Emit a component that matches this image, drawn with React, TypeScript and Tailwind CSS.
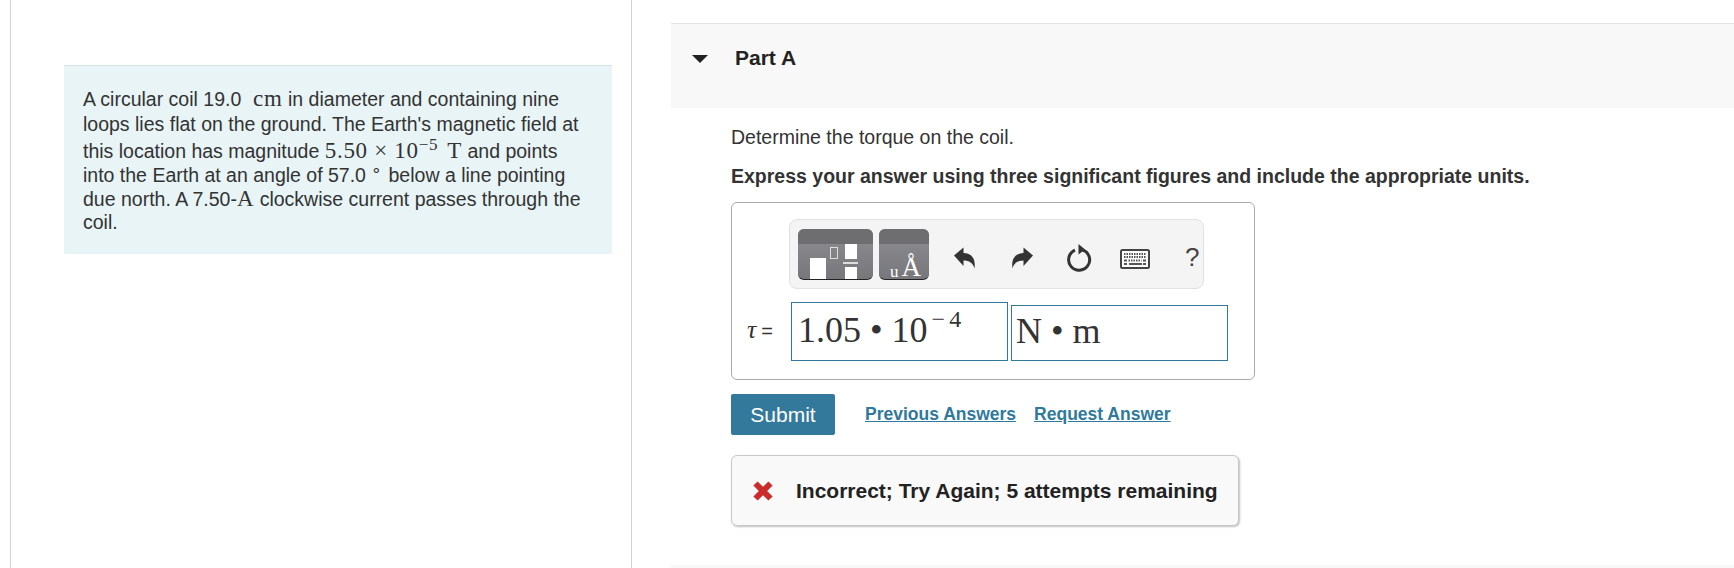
const Mth = ({ children }: { children: React.ReactNode }) => (
  <span className="font-['Liberation_Serif',serif] text-[23px] tracking-[0.7px]">{children}</span>
);

const Undo = ({ flip }: { flip?: boolean }) => (
  <svg viewBox="0 0 24 24" className={`w-[24px] h-[26px] ${flip ? "-scale-x-100" : ""}`} fill="#333">
    <path d="M1 9.500 10.500 1.500v5.500c7.500 .2 12.500 5 11 15.500-1.300-5.500-5.500-8-11-8v5.500z" />
  </svg>
);

const Reset = () => (
  <svg viewBox="0 0 28 28" className="w-[28px] h-[28px]" fill="none">
    <path d="M17.500 5.800a10.500 10.500 0 1 1-7.500 .3" stroke="#333" strokeWidth="3" />
    <path d="M13.500 0 20 5.500 13.500 10.500z" fill="#333" />
  </svg>
);

const Keyboard = () => (
  <svg viewBox="0 0 30 20" className="w-[30px] h-[20px]">
    <rect x="1" y="1" width="28" height="18" rx="1.500" fill="#fff" stroke="#444" strokeWidth="2" />
    <path d="M4 5h22M4 8h22" stroke="#555" strokeWidth="1.800" strokeDasharray="1.500 1" />
    <path d="M4 11.500h3M23 11.500h3M4 15h3M9 15h13M23 15h3" stroke="#555" strokeWidth="1.800" />
    <path d="M8.500 11.500h13" stroke="#555" strokeWidth="1.800" strokeDasharray="1.500 1" />
  </svg>
);

const Toolbar = () => (
  <div className="ml-[57px] w-[415px] h-[70px] rounded-[8px] border border-[#e2e2e2] bg-[#f4f4f4] flex items-center pl-[8px]">
    <div className="w-[75px] h-[51px] rounded-[6px] overflow-hidden bg-gradient-to-b from-[#8d8d92] to-[#77777c] border-b border-[#222] flex flex-col">
      <div className="h-[15px] bg-[#6e6e70] shrink-0" />
      <div className="flex-1 flex items-end pl-[12px]">
        <div className="w-[16px] h-[21px] bg-white" />
        <div className="w-[8px] h-[12px] border border-[#ddd] ml-[4px] mb-[20px]" />
        <div className="ml-[5px] w-[15px] h-full flex flex-col items-center">
          <div className="w-[12px] h-[15px] bg-white" />
          <div className="w-[15px] h-[2px] bg-[#ddd] mt-[3px]" />
          <div className="w-[12px] flex-1 bg-white mt-[3px]" />
        </div>
      </div>
    </div>
    <div className="w-[50px] h-[51px] ml-[6px] rounded-[6px] bg-gradient-to-b from-[#8d8d92] to-[#77777c] border-b border-[#222] flex flex-col">
      <div className="h-[15px] rounded-t-[6px] bg-[#6e6e70] shrink-0" />
      <div className="flex-1 flex items-end justify-end pr-[8px] gap-[3px] font-['Liberation_Serif',serif] text-white leading-none">
        <span className="text-[17px] leading-[14px]">u</span>
        <span className="text-[27px] leading-[24px]">Å</span>
      </div>
    </div>
    <div className="ml-[24px] mt-[7px] flex items-center"><Undo /></div>
    <div className="ml-[33px] mt-[7px] flex items-center"><Undo flip /></div>
    <div className="ml-[31px] mt-[7px] flex items-center"><Reset /></div>
    <div className="ml-[27px] mt-[10px] flex items-center"><Keyboard /></div>
    <span className="ml-[35px] text-[26px] text-[#444] mt-[6px]">?</span>
  </div>
);

export default function App() {
  return (
    <div className="flex w-[1734px] h-[568px] overflow-hidden bg-white text-[#333] font-['Liberation_Sans',Arial,sans-serif]">
      <div className="ml-[10px] w-[622px] shrink-0 border-x border-[#d4d4d4] pt-[65px] pl-[53px]">
        <div className="w-[548px] h-[189px] bg-[#e8f4f6] border-t border-[#d5e3e6] pl-[19px] pt-[21px] text-[19.500px] whitespace-nowrap">
          <div className="h-[25px] leading-[24px]">A circular coil 19.0 <Mth>&nbsp;cm</Mth> in diameter and containing nine</div>
          <div className="h-[26px] leading-[24px]">loops lies flat on the ground. The Earth's magnetic field at</div>
          <div className="h-[25px] leading-[26px]">this location has magnitude <Mth>5.50 × 10<sup className="text-[17px] -top-[8px]">−5</sup><span className="ml-[3px]"> T</span></Mth> and points</div>
          <div className="h-[24px] leading-[24px]">into the Earth at an angle of 57.0 <Mth><sup className="text-[17px] -top-[7px]">∘</sup></Mth> below a line pointing</div>
          <div className="h-[23px] leading-[24px]">due north. A 7.50-<Mth>A</Mth> clockwise current passes through the</div>
          <div className="h-[23px] leading-[24px]">coil.</div>
        </div>
      </div>

      <div className="ml-[39px] flex-1 flex flex-col">
        <div className="mt-[23px] h-[85px] bg-[#f8f8f8] border-t border-[#e2e2e2] flex items-start pt-[21px] pl-[21px] shrink-0">
          <div className="w-0 h-0 mt-[10px] border-x-[8px] border-x-transparent border-t-[8px] border-t-[#222]" />
          <span className="ml-[27px] text-[21px] font-bold text-[#222] leading-[26px]">Part A</span>
        </div>

        <div className="pl-[60px] flex flex-col">
          <p className="mt-[16px] text-[19.500px] leading-[26px]">Determine the torque on the coil.</p>
          <p className="mt-[13px] text-[19.500px] leading-[26px] font-bold">Express your answer using three significant figures and include the appropriate units.</p>

          <div className="mt-[13px] w-[524px] h-[178px] rounded-[6px] border border-[#aaa] pt-[16px]">
            <Toolbar />
            <div className="flex items-end mt-[13px] pl-[15px]">
              <span className="text-[20px] mb-[12px] w-[44px] whitespace-nowrap">
                <i className="font-['Liberation_Serif',serif] text-[26px] mr-[5px]">τ</i>=
              </span>
              <div className="w-[217px] h-[59px] border border-[#33799c] pl-[6px] font-['Liberation_Serif',serif] text-[36px] leading-[54px] whitespace-nowrap">
                1.05 • 10<sup className="text-[24px] ml-[4px] -top-[15px] tracking-[-1px]">− 4</sup>
              </div>
              <div className="ml-[3px] w-[217px] h-[56px] border border-[#33799c] pl-[4px] font-['Liberation_Serif',serif] text-[36px] leading-[51px] whitespace-nowrap">
                N • m
              </div>
            </div>
          </div>

          <div className="mt-[14px] flex items-center">
            <button className="w-[104px] h-[41px] rounded-[2px] bg-[#33799c] text-white text-[21px]">Submit</button>
            <a className="ml-[30px] text-[17.500px] font-bold text-[#2f7a9c] underline">Previous Answers</a>
            <a className="ml-[18px] text-[17.500px] font-bold text-[#2f7a9c] underline">Request Answer</a>
          </div>

          <div className="mt-[20px] w-[508px] h-[71px] rounded-[6px] border border-[#c8c8c8] bg-[#f9f9f9] shadow-[1px_1px_2px_rgba(0,0,0,0.25)] flex items-center pl-[21px]">
            <svg viewBox="0 0 20 20" className="w-[20px] h-[20px]">
              <path d="M2.500 2.500l15 15M17.500 2.500l-15 15" stroke="#cc2b2b" strokeWidth="6" />
            </svg>
            <span className="ml-[23px] text-[21px] font-bold text-[#222] whitespace-nowrap">Incorrect; Try Again; 5 attempts remaining</span>
          </div>
        </div>

        <div className="mt-auto h-[3px] bg-[#f8f8f8] shrink-0" />
      </div>
    </div>
  );
}
